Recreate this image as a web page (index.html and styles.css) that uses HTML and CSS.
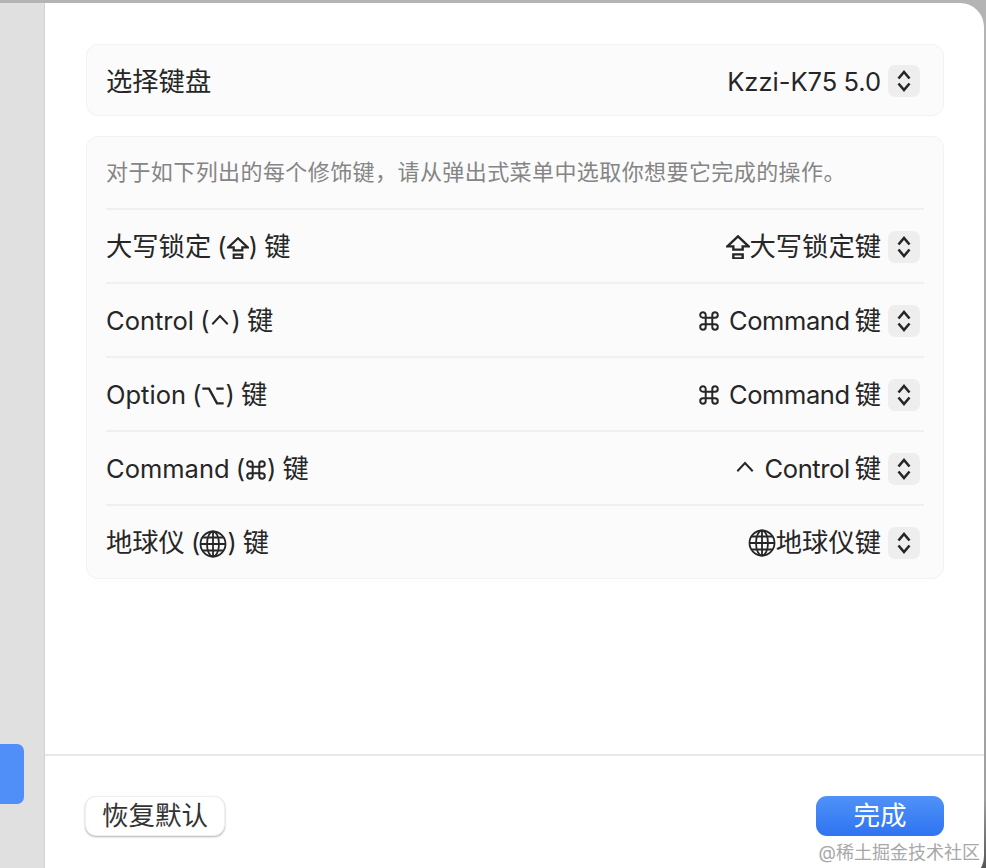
FILE: index.html
```html
<!DOCTYPE html>
<html lang="zh-CN">

<head>
    <meta charset="UTF-8">
    <title>修饰键</title>
    <link rel="stylesheet" href="styles.css">
</head>

<body>
    <div class="window">
        <div class="sidebar">
            <div class="sidebar-item"></div>
        </div>
        <div class="sheet">
            <div class="content">
                <div class="group">
                    <div class="row row-first">
                        <span class="label">选择键盘</span>
                        <div class="picker">
                            <span class="en">Kzzi-K75 5.0</span>
                            <span class="stepper"><svg viewBox="0 0 16 24"><path d="M2.500 9.500 8 3 13.500 9.500M2.500 14.500 8 21 13.500 14.500"/></svg></span>
                        </div>
                    </div>
                </div>

                <div class="group">
                    <p class="desc">对于如下列出的每个修饰键，请从弹出式菜单中选取你想要它完成的操作。</p>
                    <div class="row">
                        <span class="label">大写锁定<span class="en"> (</span><svg class="icon" viewBox="1 1 18 18"><path d="M10 2 2 9.500H6.500V12H13.500V9.500H18Z"/><path d="M6.500 15.500H13.500V18.500H6.500Z"/></svg><span class="en">) </span>键</span>
                        <div class="picker">
                            <svg class="icon icon-lg" viewBox="1 1 18 18"><path d="M10 2 2 9.500H6.500V12H13.500V9.500H18Z"/><path d="M6.500 15.500H13.500V18.500H6.500Z"/></svg>
                            <span class="label">大写锁定键</span>
                            <span class="stepper"><svg viewBox="0 0 16 24"><path d="M2.500 9.500 8 3 13.500 9.500M2.500 14.500 8 21 13.500 14.500"/></svg></span>
                        </div>
                    </div>
                    <div class="row">
                        <span class="label"><span class="en">Control (</span><svg class="icon" viewBox="0 0 20 20"><path d="M3 12 10 4.500 17 12"/></svg><span class="en">) </span>键</span>
                        <div class="picker">
                            <svg class="icon" viewBox="0 0 20 20"><path d="M7 7H13V13H7ZM7 7V4.500A2.500 2.500 0 1 0 4.500 7H7M13 7V4.500A2.500 2.500 0 1 1 15.500 7H13M7 13V15.500A2.500 2.500 0 1 1 4.500 13H7M13 13V15.500A2.500 2.500 0 1 0 15.500 13H13"/></svg>
                            <span class="label gap-left"><span class="en tight">Command</span><span class="thin"></span>键</span>
                            <span class="stepper"><svg viewBox="0 0 16 24"><path d="M2.500 9.500 8 3 13.500 9.500M2.500 14.500 8 21 13.500 14.500"/></svg></span>
                        </div>
                    </div>
                    <div class="row">
                        <span class="label"><span class="en">Option (</span><svg class="icon icon-opt" viewBox="1 1 18 18"><path d="M2 4.500H7L13 15.500H18M12.500 4.500H18"/></svg><span class="en">) </span>键</span>
                        <div class="picker">
                            <svg class="icon" viewBox="0 0 20 20"><path d="M7 7H13V13H7ZM7 7V4.500A2.500 2.500 0 1 0 4.500 7H7M13 7V4.500A2.500 2.500 0 1 1 15.500 7H13M7 13V15.500A2.500 2.500 0 1 1 4.500 13H7M13 13V15.500A2.500 2.500 0 1 0 15.500 13H13"/></svg>
                            <span class="label gap-left"><span class="en tight">Command</span><span class="thin"></span>键</span>
                            <span class="stepper"><svg viewBox="0 0 16 24"><path d="M2.500 9.500 8 3 13.500 9.500M2.500 14.500 8 21 13.500 14.500"/></svg></span>
                        </div>
                    </div>
                    <div class="row">
                        <span class="label"><span class="en">Command (</span><svg class="icon" viewBox="0 0 20 20"><path d="M7 7H13V13H7ZM7 7V4.500A2.500 2.500 0 1 0 4.500 7H7M13 7V4.500A2.500 2.500 0 1 1 15.500 7H13M7 13V15.500A2.500 2.500 0 1 1 4.500 13H7M13 13V15.500A2.500 2.500 0 1 0 15.500 13H13"/></svg><span class="en">) </span>键</span>
                        <div class="picker">
                            <svg class="icon" viewBox="0 0 20 20"><path d="M3 12 10 4.500 17 12"/></svg>
                            <span class="label gap-left"><span class="en tight">Control</span><span class="thin"></span>键</span>
                            <span class="stepper"><svg viewBox="0 0 16 24"><path d="M2.500 9.500 8 3 13.500 9.500M2.500 14.500 8 21 13.500 14.500"/></svg></span>
                        </div>
                    </div>
                    <div class="row">
                        <span class="label">地球仪<span class="en"> (</span><svg class="icon globe" viewBox="0 0 28 28"><circle cx="14" cy="14" r="12.500"/><ellipse cx="14" cy="14" rx="6" ry="12.500"/><path d="M14 1.500V26.500M1.500 14H26.500M3.500 7.500H24.500M3.500 20.500H24.500"/></svg><span class="en">) </span>键</span>
                        <div class="picker">
                            <svg class="icon globe" viewBox="0 0 28 28"><circle cx="14" cy="14" r="12.500"/><ellipse cx="14" cy="14" rx="6" ry="12.500"/><path d="M14 1.500V26.500M1.500 14H26.500M3.500 7.500H24.500M3.500 20.500H24.500"/></svg>
                            <span class="label">地球仪键</span>
                            <span class="stepper"><svg viewBox="0 0 16 24"><path d="M2.500 9.500 8 3 13.500 9.500M2.500 14.500 8 21 13.500 14.500"/></svg></span>
                        </div>
                    </div>
                </div>
            </div>

            <div class="footer">
                <button class="btn">恢复默认</button>
                <button class="btn btn-primary">完成</button>
            </div>
            <div class="watermark">@稀土掘金技术社区</div>
        </div>
    </div>
</body>

</html>
```

FILE: styles.css
```css
* {
    box-sizing: border-box;
}

body {
    margin: 0;
    width: 986px;
    height: 868px;
    overflow: hidden;
    font-family: Inter, 'Noto Sans CJK SC', sans-serif;
    color: #262626;
}

.window {
    display: flex;
    height: 868px;
    padding: 3px 2px 0 0;
    background: linear-gradient(#b4b4b4, #a0a0a0 92%, #555);
}

.sidebar {
    width: 45px;
    padding-top: 741px;
    background-color: #e0e0e0;
    border-right: 1px solid #d2d2d2;
}

.sidebar-item {
    width: 24px;
    height: 60px;
    background-color: #4f8ff7;
    border-radius: 0 7px 7px 0;
}

.sheet {
    flex: 1;
    display: flex;
    flex-direction: column;
    position: relative;
    margin-bottom: -12px;
    background-color: #fff;
    border-radius: 0 24px 24px 0;
}

.content {
    flex: 1;
    padding: 41px 40px 0 41px;
}

.group {
    margin-bottom: 20px;
    padding: 0 19px;
    background-color: #fbfbfb;
    border: 1px solid #f2f2f2;
    border-radius: 12px;
}

.row {
    display: flex;
    align-items: center;
    justify-content: space-between;
    height: 74px;
    padding-top: 2px;
    border-top: 2px solid #f0f0f0;
}

.row-first {
    height: 70px;
    padding-top: 4px;
    border-top: none;
}

.row-first .stepper {
    margin-top: -2px;
}

.desc {
    margin: 0;
    height: 71px;
    line-height: 71px;
    font-size: 22px;
    letter-spacing: 0.42px;
    color: #858585;
    white-space: nowrap;
}

.label {
    font-size: 26.300px;
    line-height: 32px;
    white-space: pre;
}

.en {
    font-size: 25.500px;
    line-height: 32px;
    word-spacing: -1px;
    white-space: pre;
}

.tight {
    letter-spacing: -0.4px;
}

.thin {
    display: inline-block;
    width: 5px;
}

.picker {
    display: flex;
    align-items: center;
    margin-right: 4px;
}

.icon {
    width: 22px;
    height: 22px;
    vertical-align: -3px;
    fill: none;
    stroke: #262626;
    stroke-width: 1.800;
}

.icon-lg,
.icon-opt {
    width: 24px;
    height: 24px;
}

.icon-opt {
    vertical-align: -4px;
}

.globe {
    width: 28px;
    height: 28px;
    margin-left: -1px;
    vertical-align: -6px;
}

.gap-left {
    margin-left: 9px;
}

.stepper {
    display: flex;
    align-items: center;
    justify-content: center;
    width: 32px;
    height: 32px;
    margin-left: 7px;
    background-color: #eeeeee;
    border-radius: 7px;
}

.stepper svg {
    width: 16px;
    height: 24px;
    fill: none;
    stroke: #262626;
    stroke-width: 2.600;
}

.footer {
    display: flex;
    justify-content: space-between;
    height: 126px;
    padding: 40px 40px 0;
    border-top: 2px solid #e8e8e8;
}

.btn {
    width: 140px;
    height: 40px;
    padding: 0 0 3px;
    font-family: inherit;
    font-size: 26.500px;
    line-height: 36px;
    color: #333;
    background-color: #fff;
    border: 1px solid #efefef;
    border-radius: 11px;
    box-shadow: 0 1px 2px rgba(0, 0, 0, 0.3);
}

.btn-primary {
    width: 128px;
    color: #fff;
    background: linear-gradient(#4f92f8, #2f73f2);
    border: none;
    box-shadow: none;
}

.watermark {
    position: absolute;
    right: 4px;
    bottom: 16px;
    font-size: 18px;
    color: #a8a8a8;
}
```
